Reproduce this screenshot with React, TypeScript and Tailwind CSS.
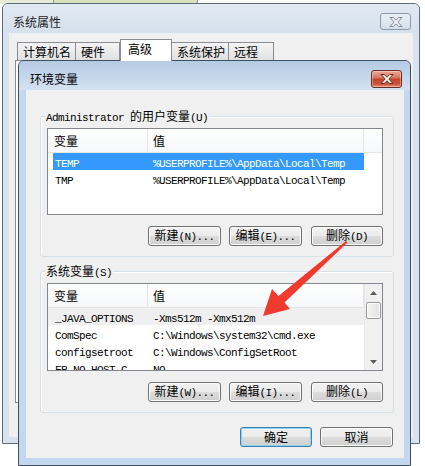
import React from "react";

function T({ s, cjk = "text-[12px]", mono = "text-[11px]" }: { s: string; cjk?: string; mono?: string }) {
  const parts = s.split(/([\x00-\x7f]+)/).filter(Boolean);
  return (
    <>
      {parts.map((p, i) =>
        /^[\x00-\x7f]+$/.test(p) ? (
          <span key={i} className={`font-['Liberation_Mono',monospace] tracking-[-0.6px] whitespace-pre ${mono}`}>
            {p}
          </span>
        ) : (
          <span key={i} className={`font-['Noto_Sans_CJK_SC',sans-serif] ${cjk}`}>
            {p}
          </span>
        )
      )}
    </>
  );
}

function XGlyph({ fill, stroke }: { fill: string; stroke: string }) {
  return (
    <svg width="14" height="10" viewBox="0 0 14 10">
      <polygon
        points="1,0.5 4.2,0.5 7,3.2 9.8,0.5 13,0.5 8.8,5 13,9.5 9.8,9.5 7,6.8 4.2,9.5 1,9.5 5.2,5"
        fill={fill}
        stroke={stroke}
        strokeWidth="1"
        strokeLinejoin="round"
      />
    </svg>
  );
}

function Btn({ label, w, focus }: { label: string; w: string; focus?: boolean }) {
  return (
    <div
      className={`h-[20px] rounded-[3px] border flex items-center justify-center leading-[16px] bg-[linear-gradient(#f2f2f2_0%,#ebebeb_50%,#dddddd_50%,#cfcfcf_100%)] ${
        focus ? "border-[#3c7fb1] shadow-[inset_0_0_0_1px_#8ed4f5]" : "border-[#707070] shadow-[inset_0_0_0_1px_#fbfbfb]"
      } ${w}`}
    >
      <span className="flex items-baseline">
        <T s={label} />
      </span>
    </div>
  );
}

function Scrollbar() {
  return (
    <div className="w-[18px] h-full flex flex-col bg-[#f0f0f0] border-l border-[#e8e8e8]">
      <div className="h-[17px] shrink-0 flex items-center justify-center">
        <svg width="7" height="4" viewBox="0 0 7 4">
          <polygon points="3.5,0 7,4 0,4" fill="#5a5a5a" />
        </svg>
      </div>
      <div className="mt-[1px] ml-[1px] w-[15px] h-[17px] shrink-0 rounded-[2px] border border-[#979797] bg-[linear-gradient(90deg,#f4f4f4,#e2e2e2)] shadow-[inset_0_0_0_1px_#ffffff]" />
      <div className="flex-1" />
      <div className="h-[17px] shrink-0 flex items-center justify-center">
        <svg width="7" height="4" viewBox="0 0 7 4">
          <polygon points="0,0 7,0 3.5,4" fill="#5a5a5a" />
        </svg>
      </div>
    </div>
  );
}

type RowT = { a: string; b: string; sel?: boolean; hover?: boolean };

function ListView({ rows, scroll, h }: { rows: RowT[]; scroll?: boolean; h: string }) {
  return (
    <div className={`w-[336px] border border-[#828790] bg-white flex overflow-hidden ${h}`}>
      <div className="w-[316px] shrink-0 flex flex-col">
        <div className="h-[24px] shrink-0 flex border-b border-[#e5e5e5] bg-[linear-gradient(#ffffff,#f6f7f9)]">
          <div className="w-[100px] border-r border-[#e5e5e5] pl-[6px] flex items-center leading-[16px]">
            <T s="变量" />
          </div>
          <div className="w-[216px] border-r border-[#e5e5e5] pl-[5px] flex items-center leading-[16px]">
            <T s="值" />
          </div>
        </div>
        {rows.map((r, i) => (
          <div key={i} className={`h-[17px] shrink-0 w-[316px] ${r.hover ? "bg-[#efefef]" : ""}`}>
            <div
              className={`ml-[5px] h-full flex items-center leading-[16px] ${
                r.sel ? "bg-[#3399ff] text-white" : "text-black"
              }`}
            >
              <div className="w-[95px] pl-[2px] whitespace-pre">
                <T s={r.a} />
              </div>
              <div className="pl-[5px] whitespace-pre">
                <T s={r.b} />
              </div>
            </div>
          </div>
        ))}
      </div>
      {scroll ? (
        <Scrollbar />
      ) : (
        <div className="w-[18px] flex flex-col">
          <div className="h-[24px] border-b border-[#e5e5e5] bg-[linear-gradient(#ffffff,#f6f7f9)]" />
        </div>
      )}
    </div>
  );
}

function Group({ label, h, children }: { label: string; h: string; children: React.ReactNode }) {
  return (
    <div
      className={`relative ml-[14px] w-[354px] border border-[#d5dfe5] rounded-[3px] shadow-[inset_1px_1px_0_#ffffff] ${h}`}
    >
      <div className="absolute left-[4px] top-[-8px] bg-[#f0f0f0] px-[1px] leading-[14px] flex items-baseline">
        <T s={label} />
      </div>
      {children}
    </div>
  );
}

export default function App() {
  return (
    <div className="relative w-[425px] h-[466px] bg-white overflow-hidden text-black font-['Noto_Sans_CJK_SC',sans-serif]">
      {/* desktop strip */}
      <div className="absolute left-0 top-0 w-[425px] h-[4px] flex">
        <div className="w-[53px] bg-[#e8ebd6]" />
        <div className="w-[145px] bg-[#d7e3bc] border-l border-r border-[#9a9a9a]" />
      </div>

      {/* outer window 系统属性 */}
      <div className="absolute left-[2px] top-[3px] w-[418px] h-[441px] border border-[#5d6b7b] rounded-t-[6px] bg-[#d9e3ef] flex flex-col">
        <div className="h-[29px] shrink-0 flex items-center pl-[10px] pr-[8px] pt-[6px] rounded-t-[5px] bg-[linear-gradient(#e1e9f3,#d6e1ed)]">
          <span className="text-[12px] leading-[16px] text-[#1e1e1e]">系统属性</span>
          <div className="ml-auto w-[31px] h-[17px] rounded-[3px] border border-[#8d9aab] bg-[linear-gradient(#eaf0f7,#d5dfeb)] flex items-center justify-center">
            <XGlyph fill="#f4f6f9" stroke="#7d8794" />
          </div>
        </div>
        <div className="mx-[6px] mb-[6px] flex-1 bg-[#f0f0f0] flex flex-col pl-[6px]">
          <div className="mt-[6px] h-[21px] shrink-0 flex items-end pl-[2px]">
            {[
              { t: "计算机名", w: "w-[59px]" },
              { t: "硬件", w: "w-[45px]" },
              { t: "高级", w: "w-[52px]", sel: true },
              { t: "系统保护", w: "w-[58px]" },
              { t: "远程", w: "w-[46px]" },
            ].map((tab, i) =>
              tab.sel ? (
                <div
                  key={i}
                  className={`relative z-10 h-[22px] -mb-[1px] bg-white border border-b-0 border-[#898c95] pl-[7px] pt-[1px] leading-[16px] text-[12px] ${tab.w}`}
                >
                  {tab.t}
                </div>
              ) : (
                <div
                  key={i}
                  className={`h-[18px] -ml-[1px] first:ml-0 border border-b-0 border-[#898c95] bg-[linear-gradient(#f4f4f4,#e1e1e1)] pl-[5px] pt-[1px] leading-[16px] text-[12px] ${tab.w}`}
                >
                  {tab.t}
                </div>
              )
            )}
          </div>
          <div className="h-[343px] mr-[6px] border border-[#898c95] bg-white shadow-[inset_1px_0_0_#ffffff]" />
        </div>
      </div>

      {/* inner window 环境变量 */}
      <div className="absolute left-[18px] top-[60px] w-[393px] h-[406px] border border-[#3f4f61] rounded-t-[6px] bg-[#c3d7ee] flex flex-col">
        <div className="h-[29px] shrink-0 flex items-center pl-[11px] pr-[8px] pt-[6px] rounded-t-[5px] bg-[linear-gradient(#b5cae4,#d4e2f2)]">
          <span className="text-[12px] leading-[16px] text-black">环境变量</span>
          <div className="ml-auto w-[31px] h-[18px] rounded-[3px] border border-[#6e2b1f] bg-[linear-gradient(#e9a897_0%,#d77a63_40%,#c3442d_52%,#cc5236_80%,#e0907a_100%)] shadow-[inset_0_0_0_1px_rgba(255,255,255,0.35)] flex items-center justify-center">
            <XGlyph fill="#ffffff" stroke="#6b2a1c" />
          </div>
        </div>
        <div className="ml-[7px] mr-[6px] mb-[7px] flex-1 bg-[#f0f0f0] flex flex-col">
          <div className="mt-[26px]">
            <Group label="Administrator 的用户变量(U)" h="h-[141px]">
              <div className="pl-[6px] pt-[11px]">
                <ListView
                  h="h-[87px]"
                  rows={[
                    { a: "TEMP", b: "%USERPROFILE%\\AppData\\Local\\Temp", sel: true },
                    { a: "TMP", b: "%USERPROFILE%\\AppData\\Local\\Temp" },
                  ]}
                />
              </div>
              <div className="mt-[11px] flex justify-end pr-[10px]">
                <Btn label="新建(N)..." w="w-[73px]" />
                <div className="ml-[8px]">
                  <Btn label="编辑(E)..." w="w-[73px]" />
                </div>
                <div className="ml-[9px]">
                  <Btn label="删除(D)" w="w-[72px]" />
                </div>
              </div>
            </Group>
          </div>
          <div className="mt-[14px]">
            <Group label="系统变量(S)" h="h-[142px]">
              <div className="pl-[6px] pt-[11px]">
                <ListView
                  h="h-[88px]"
                  scroll
                  rows={[
                    { a: "_JAVA_OPTIONS", b: "-Xms512m -Xmx512m", hover: true },
                    { a: "ComSpec", b: "C:\\Windows\\system32\\cmd.exe" },
                    { a: "configsetroot", b: "C:\\Windows\\ConfigSetRoot" },
                    { a: "FP_NO_HOST_C", b: "NO" },
                  ]}
                />
              </div>
              <div className="mt-[11px] flex justify-end pr-[10px]">
                <Btn label="新建(W)..." w="w-[73px]" />
                <div className="ml-[8px]">
                  <Btn label="编辑(I)..." w="w-[73px]" />
                </div>
                <div className="ml-[9px]">
                  <Btn label="删除(L)" w="w-[72px]" />
                </div>
              </div>
            </Group>
          </div>
          <div className="mt-[14px] flex justify-end pr-[11px]">
            <Btn label="确定" w="w-[72px]" focus />
            <div className="ml-[8px]">
              <Btn label="取消" w="w-[73px]" />
            </div>
          </div>
        </div>
      </div>

      {/* red arrow annotation */}
      <svg className="absolute left-0 top-0 pointer-events-none" width="425" height="466" viewBox="0 0 425 466">
        <polygon
          points="263,316 290,309 284.5,302.5 347.5,242.5 346,241 278.5,296 272,289"
          fill="#f03a2e"
        />
      </svg>
    </div>
  );
}
